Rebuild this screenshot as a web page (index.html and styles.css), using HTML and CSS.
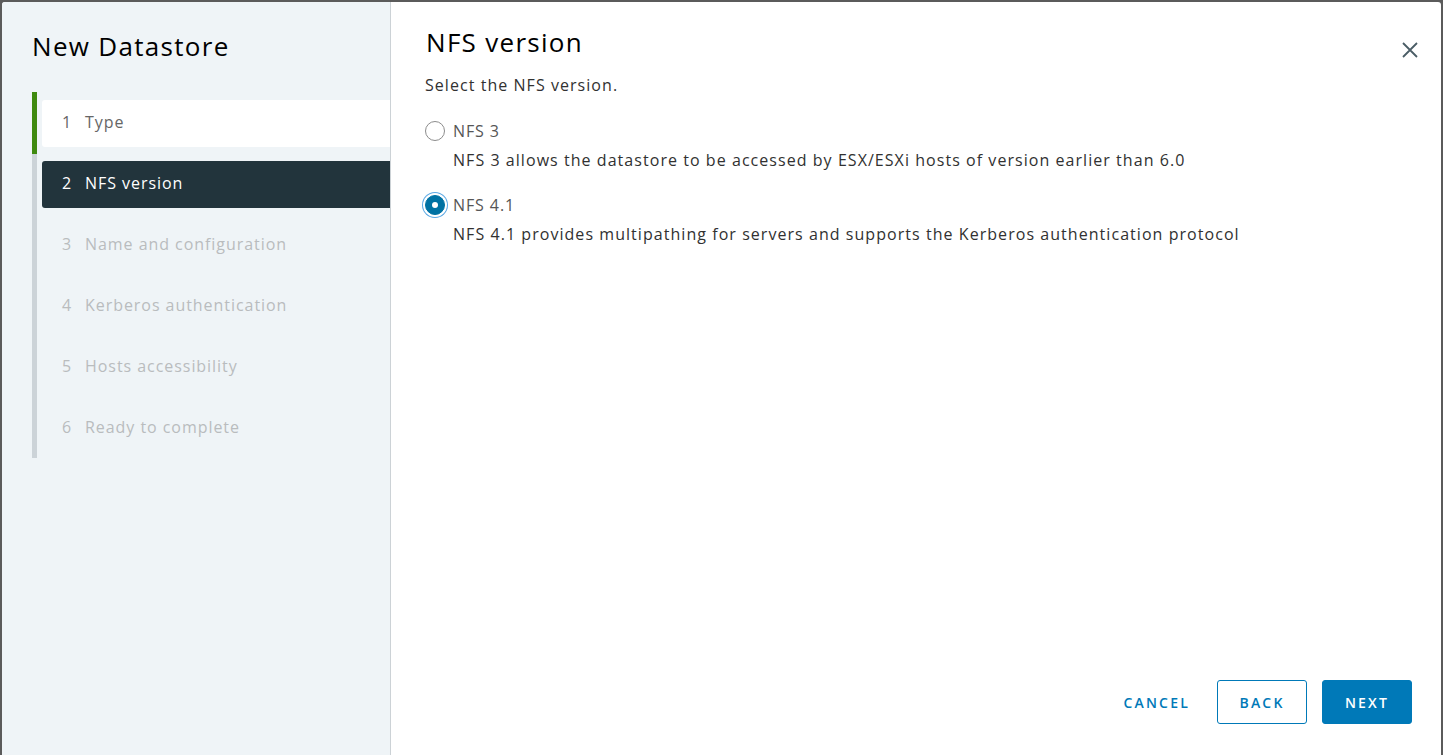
FILE: index.html
```html
<!DOCTYPE html>
<html lang="en">
<head>
  <meta charset="UTF-8">
  <meta name="viewport" content="width=device-width, initial-scale=1.0">
  <title>New Datastore</title>
  <link rel="stylesheet" href="styles.css">
</head>
<body>

  <!-- wizard modal -->
  <div class="modal">

    <!-- step navigation -->
    <nav class="wizard-nav">
      <h2 class="wizard-title">New Datastore</h2>
      <ul class="steps">
        <li class="step done"><div class="step-box"><span class="num">1</span>Type</div></li>
        <li class="step current"><div class="step-box"><span class="num">2</span>NFS version</div></li>
        <li class="step"><div class="step-box"><span class="num">3</span>Name and configuration</div></li>
        <li class="step"><div class="step-box"><span class="num">4</span>Kerberos authentication</div></li>
        <li class="step"><div class="step-box"><span class="num">5</span>Hosts accessibility</div></li>
        <li class="step"><div class="step-box"><span class="num">6</span>Ready to complete</div></li>
      </ul>
    </nav>

    <!-- page content -->
    <section class="wizard-main">
      <div class="main-head">
        <h3 class="page-title">NFS version</h3>
        <button class="close-btn" aria-label="Close">
          <svg width="18" height="18" viewBox="0 0 18 18">
            <path d="M2 2 L16 16 M16 2 L2 16" stroke="#4a5d66" stroke-width="1.8" fill="none"/>
          </svg>
        </button>
      </div>

      <p class="intro">Select the NFS version.</p>

      <div class="option">
        <label class="radio-row"><span class="radio"></span>NFS 3</label>
        <p class="option-desc">NFS 3 allows the datastore to be accessed by ESX/ESXi hosts of version earlier than 6.0</p>
      </div>

      <div class="option">
        <label class="radio-row"><span class="radio checked"></span>NFS 4.1</label>
        <p class="option-desc">NFS 4.1 provides multipathing for servers and supports the Kerberos authentication protocol</p>
      </div>

      <div class="footer">
        <button class="btn btn-link">CANCEL</button>
        <button class="btn btn-outline">BACK</button>
        <button class="btn btn-primary">NEXT</button>
      </div>
    </section>

  </div>

</body>
</html>
```

FILE: styles.css
```css
/* ===== page ===== */
body {
  margin: 0;
  padding: 2px 2px 0 2px;
  height: 100vh;
  box-sizing: border-box;
  overflow: hidden;
  background: #5b5b5b;
  font-family: "Open Sans", "Liberation Sans", sans-serif;
  color: #313131;
}

/* ===== modal ===== */
.modal {
  display: flex;
  height: 760px;
  background: #fff;
  border-radius: 3px 3px 0 0;
  overflow: hidden;
}

/* ===== left nav ===== */
.wizard-nav {
  width: 389px;
  flex-shrink: 0;
  box-sizing: border-box;
  background: #eff4f7;
  border-right: 1px solid #ccd2d6;
  padding: 28px 0 0 30px;
}
.wizard-title {
  margin: 0 0 30px 0;
  font-size: 26px;
  line-height: 32px;
  font-weight: 400;
  letter-spacing: 1.3px;
  color: #000;
}

.steps {
  list-style: none;
  margin: 0;
  padding: 0;
}
.step {
  border-left: 5px solid #ccd3d8;
  padding: 7px 0 7px 5px;
}
.step:first-child {
  padding-top: 8px;
}
.step:last-child {
  padding-bottom: 6px;
}
.step.done {
  border-left-color: #3f8a0f;
}
.step-box {
  height: 47px;
  box-sizing: border-box;
  padding: 0 0 3px 20px;
  display: flex;
  align-items: center;
  border-radius: 3px 0 0 3px;
  font-size: 16px;
  letter-spacing: 0.95px;
  color: #b9bcbe;
}
.num {
  width: 23px;
  flex-shrink: 0;
  letter-spacing: 0;
}
.step.done .step-box {
  background: #fff;
  color: #666;
}
.step.current .step-box {
  background: #22343c;
  color: #fff;
}

/* ===== right content ===== */
.wizard-main {
  flex: 1;
  display: flex;
  flex-direction: column;
  padding: 24px 29px 38px 34px;
}
.main-head {
  display: flex;
  justify-content: space-between;
  align-items: flex-start;
}
.page-title {
  margin: 0 0 15px 1px;
  font-size: 26px;
  line-height: 32px;
  font-weight: 400;
  letter-spacing: 1.3px;
  color: #000;
}
.close-btn {
  background: none;
  border: none;
  padding: 0;
  margin: 15px -7px 0 0;
  cursor: pointer;
}

.intro {
  margin: 0 0 22px 0;
  font-size: 16px;
  line-height: 24px;
  letter-spacing: 1.05px;
  color: #313131;
}

.option {
  margin-bottom: 21px;
}
.radio-row {
  display: flex;
  align-items: center;
  gap: 8px;
  font-size: 16px;
  line-height: 24px;
  letter-spacing: 0.9px;
  color: #565656;
}
.radio {
  width: 18px;
  height: 18px;
  border: 1px solid #8c8c8c;
  border-radius: 50%;
  background: #fff;
  flex-shrink: 0;
  position: relative;
}
.radio.checked {
  background: #0072a3;
  border-color: #0072a3;
  box-shadow: 0 0 0 2px #fff, 0 0 0 3px #5aa8e4;
}
.radio.checked::after {
  content: "";
  position: absolute;
  left: 50%;
  top: 50%;
  width: 6px;
  height: 6px;
  margin: -3px 0 0 -3px;
  border-radius: 50%;
  background: #fff;
}
.option-desc {
  margin: 5px 0 0 28px;
  font-size: 16px;
  line-height: 24px;
  letter-spacing: 1.05px;
  color: #313131;
}

/* ===== footer buttons ===== */
.footer {
  margin-top: auto;
  display: flex;
  justify-content: flex-end;
  gap: 15px;
}
.btn {
  min-width: 90px;
  height: 44px;
  padding: 0 12px;
  box-sizing: border-box;
  border-radius: 3px;
  font-family: "Open Sans", "Liberation Sans", sans-serif;
  font-size: 14px;
  font-weight: 600;
  letter-spacing: 2.2px;
  cursor: pointer;
}
.btn-link {
  background: none;
  border: none;
  color: #0079b8;
}
.btn-outline {
  background: #fff;
  border: 1px solid #0079b8;
  color: #0079b8;
}
.btn-primary {
  background: #0079b8;
  border: 1px solid #0079b8;
  color: #fff;
}
```
